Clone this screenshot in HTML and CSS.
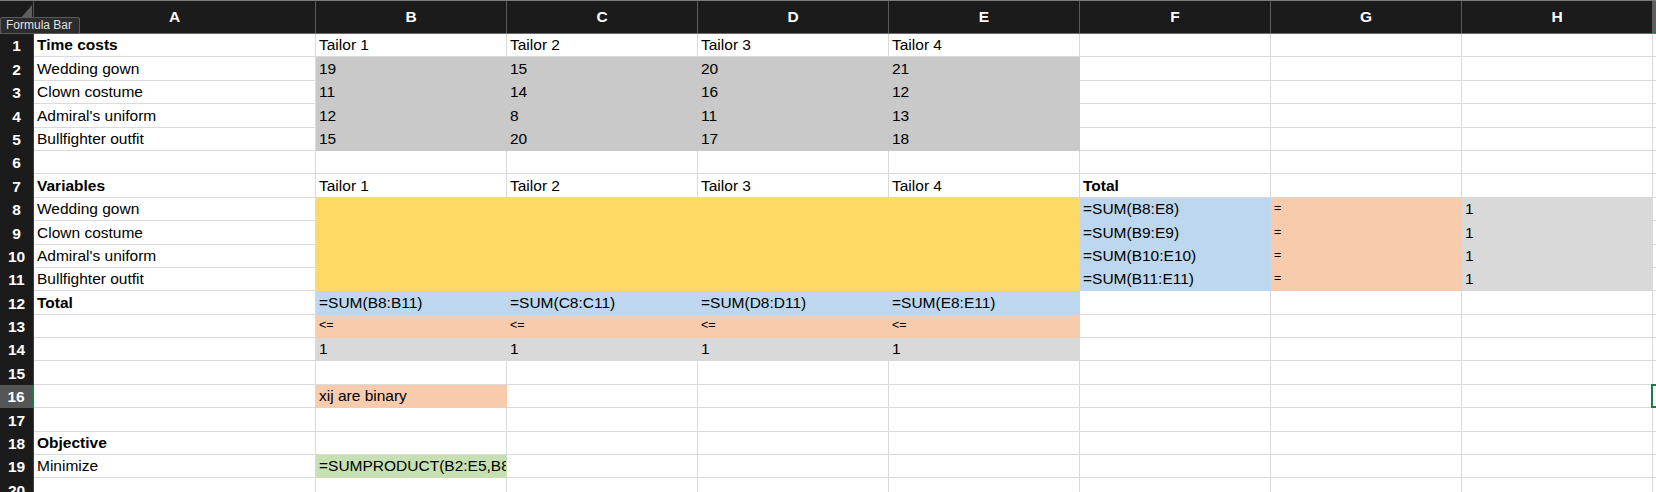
FILE: index.html
```html
<!DOCTYPE html>
<html>
<head>
<meta charset="utf-8">
<link rel="stylesheet" href="styles.css">
</head>
<body>
<div class="sheet">
  <div class="row head">
    <div class="corner"><svg class="tri" width="34" height="33" viewBox="0 0 34 33"><polygon points="32,4 32,31 9,31" fill="#5f5f5f"/></svg></div>
    <div class="ch">A</div><div class="ch">B</div><div class="ch">C</div><div class="ch">D</div><div class="ch">E</div><div class="ch">F</div><div class="ch">G</div><div class="ch">H</div><div class="ch sel-col"></div>
  </div>

  <div class="row"><div class="rh">1</div><div class="c b">Time costs</div><div class="c">Tailor 1</div><div class="c">Tailor 2</div><div class="c">Tailor 3</div><div class="c">Tailor 4</div><div class="c"></div><div class="c"></div><div class="c"></div><div class="c i"></div></div>
  <div class="row"><div class="rh">2</div><div class="c">Wedding gown</div><div class="c grey">19</div><div class="c grey">15</div><div class="c grey">20</div><div class="c grey">21</div><div class="c"></div><div class="c"></div><div class="c"></div><div class="c i"></div></div>
  <div class="row"><div class="rh">3</div><div class="c">Clown costume</div><div class="c grey">11</div><div class="c grey">14</div><div class="c grey">16</div><div class="c grey">12</div><div class="c"></div><div class="c"></div><div class="c"></div><div class="c i"></div></div>
  <div class="row"><div class="rh">4</div><div class="c">Admiral's uniform</div><div class="c grey">12</div><div class="c grey">8</div><div class="c grey">11</div><div class="c grey">13</div><div class="c"></div><div class="c"></div><div class="c"></div><div class="c i"></div></div>
  <div class="row"><div class="rh">5</div><div class="c">Bullfighter outfit</div><div class="c grey">15</div><div class="c grey">20</div><div class="c grey">17</div><div class="c grey">18</div><div class="c"></div><div class="c"></div><div class="c"></div><div class="c i"></div></div>
  <div class="row"><div class="rh">6</div><div class="c"></div><div class="c"></div><div class="c"></div><div class="c"></div><div class="c"></div><div class="c"></div><div class="c"></div><div class="c"></div><div class="c i"></div></div>
  <div class="row"><div class="rh">7</div><div class="c b">Variables</div><div class="c">Tailor 1</div><div class="c">Tailor 2</div><div class="c">Tailor 3</div><div class="c">Tailor 4</div><div class="c b">Total</div><div class="c"></div><div class="c"></div><div class="c i"></div></div>
  <div class="row"><div class="rh">8</div><div class="c">Wedding gown</div><div class="c yel"></div><div class="c yel"></div><div class="c yel"></div><div class="c yel"></div><div class="c blue">=SUM(B8:E8)</div><div class="c peach sm">=</div><div class="c lg">1</div><div class="c i"></div></div>
  <div class="row"><div class="rh">9</div><div class="c">Clown costume</div><div class="c yel"></div><div class="c yel"></div><div class="c yel"></div><div class="c yel"></div><div class="c blue">=SUM(B9:E9)</div><div class="c peach sm">=</div><div class="c lg">1</div><div class="c i"></div></div>
  <div class="row"><div class="rh">10</div><div class="c">Admiral's uniform</div><div class="c yel"></div><div class="c yel"></div><div class="c yel"></div><div class="c yel"></div><div class="c blue">=SUM(B10:E10)</div><div class="c peach sm">=</div><div class="c lg">1</div><div class="c i"></div></div>
  <div class="row"><div class="rh">11</div><div class="c">Bullfighter outfit</div><div class="c yel"></div><div class="c yel"></div><div class="c yel"></div><div class="c yel"></div><div class="c blue">=SUM(B11:E11)</div><div class="c peach sm">=</div><div class="c lg">1</div><div class="c i"></div></div>
  <div class="row"><div class="rh">12</div><div class="c b">Total</div><div class="c blue">=SUM(B8:B11)</div><div class="c blue">=SUM(C8:C11)</div><div class="c blue">=SUM(D8:D11)</div><div class="c blue">=SUM(E8:E11)</div><div class="c"></div><div class="c"></div><div class="c"></div><div class="c i"></div></div>
  <div class="row"><div class="rh">13</div><div class="c"></div><div class="c peach sm">&lt;=</div><div class="c peach sm">&lt;=</div><div class="c peach sm">&lt;=</div><div class="c peach sm">&lt;=</div><div class="c"></div><div class="c"></div><div class="c"></div><div class="c i"></div></div>
  <div class="row"><div class="rh">14</div><div class="c"></div><div class="c lg">1</div><div class="c lg">1</div><div class="c lg">1</div><div class="c lg">1</div><div class="c"></div><div class="c"></div><div class="c"></div><div class="c i"></div></div>
  <div class="row"><div class="rh">15</div><div class="c"></div><div class="c"></div><div class="c"></div><div class="c"></div><div class="c"></div><div class="c"></div><div class="c"></div><div class="c"></div><div class="c i"></div></div>
  <div class="row"><div class="rh sel-row">16</div><div class="c"></div><div class="c peach">xij are binary</div><div class="c"></div><div class="c"></div><div class="c"></div><div class="c"></div><div class="c"></div><div class="c"></div><div class="c i active"></div></div>
  <div class="row"><div class="rh">17</div><div class="c"></div><div class="c"></div><div class="c"></div><div class="c"></div><div class="c"></div><div class="c"></div><div class="c"></div><div class="c"></div><div class="c i"></div></div>
  <div class="row"><div class="rh">18</div><div class="c b">Objective</div><div class="c"></div><div class="c"></div><div class="c"></div><div class="c"></div><div class="c"></div><div class="c"></div><div class="c"></div><div class="c i"></div></div>
  <div class="row"><div class="rh">19</div><div class="c">Minimize</div><div class="c green">=SUMPRODUCT(B2:E5,B8:E11)</div><div class="c"></div><div class="c"></div><div class="c"></div><div class="c"></div><div class="c"></div><div class="c"></div><div class="c i"></div></div>
  <div class="row"><div class="rh">20</div><div class="c"></div><div class="c"></div><div class="c"></div><div class="c"></div><div class="c"></div><div class="c"></div><div class="c"></div><div class="c"></div><div class="c i"></div></div>
</div>
<div class="tooltip">Formula Bar</div>
</body>
</html>
```

FILE: styles.css
```css
* {
  box-sizing: border-box;
  margin: 0;
  padding: 0;
}

html, body {
  width: 1656px;
  height: 492px;
  overflow: hidden;
  background: #ffffff;
}

body {
  position: relative;
  font-family: "Liberation Sans", Arial, sans-serif;
  font-size: 15.5px;
  color: #000000;
}

.sheet {
  display: flex;
  flex-direction: column;
}

.row {
  display: grid;
  grid-template-columns: 34px 282px repeat(7, 191px) 1fr;
  height: 23.4px;
  flex: none;
}

.row.head {
  height: 34px;
  background: #1b1b1b;
  border-top: 1px solid #7a7a7a;
  border-bottom: 1px solid #6a6a6a;
}

.corner {
  position: relative;
  border-right: 1px solid #555555;
}

.tri {
  position: absolute;
  left: 0;
  top: 0;
  display: block;
}

.ch {
  display: flex;
  align-items: center;
  justify-content: center;
  color: #ffffff;
  font-weight: bold;
  font-size: 15.5px;
  border-right: 1px solid #5a5a5a;
}

.ch.sel-col {
  background: #5e5e5e;
  border-right: none;
  border-bottom: 2px solid #1f7a45;
}

.rh {
  display: flex;
  align-items: flex-end;
  justify-content: center;
  padding-bottom: 3px;
  line-height: 17px;
  background: #1b1b1b;
  color: #ffffff;
  font-weight: bold;
  font-size: 15.5px;
  border-right: 1px solid #3c3c3c;
}

.rh.sel-row {
  background: #555555;
  border-right: 2px solid #1f7a45;
}

.c {
  display: flex;
  align-items: flex-end;
  padding: 0 3px 3px 3px;
  line-height: 17px;
  white-space: nowrap;
  overflow: hidden;
  border-right: 1px solid #dadada;
  border-bottom: 1px solid #dadada;
}

.c.i {
  border-right: none;
}

.c.b {
  font-weight: bold;
}

.c.sm {
  font-size: 12.5px;
}

.grey {
  background: #c9c9c9;
  border-color: #c9c9c9;
}

.yel {
  background: #fed966;
  border-color: #fed966;
}

.blue {
  background: #bdd7ee;
  border-color: #bdd7ee;
}

.peach {
  background: #f8cbad;
  border-color: #f8cbad;
}

.lg {
  background: #d9d9d9;
  border-color: #d9d9d9;
}

.green {
  background: #c6e0b4;
  border-color: #c6e0b4;
}

.active {
  position: relative;
  overflow: visible;
}

.active::after {
  content: "";
  position: absolute;
  left: -2px;
  top: -1px;
  right: -6px;
  bottom: -1px;
  border: 2px solid #1f7a45;
}

.tooltip {
  position: absolute;
  left: 0;
  top: 17px;
  width: 80px;
  height: 17px;
  padding-left: 5px;
  background: #2c2c2c;
  border: 1px solid #5c5c5c;
  border-radius: 2px;
  color: #e2e2e2;
  font-size: 12px;
  line-height: 15px;
  white-space: nowrap;
}
```
